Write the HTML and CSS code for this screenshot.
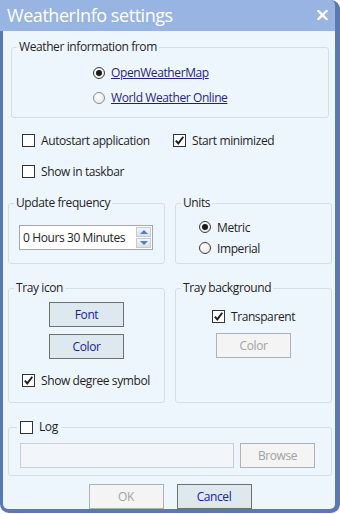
FILE: index.html
```html
<!DOCTYPE html>
<html lang="en">
<head>
    <meta charset="UTF-8">
    <title>WeatherInfo settings</title>
    <link rel="stylesheet" href="styles.css">
</head>
<body>

<div class="window">
    <div class="titlebar">
        <span class="title">WeatherInfo settings</span>
        <svg class="close" width="11" height="10" viewBox="0 0 11 10">
            <path d="M1.5 1 L9.5 9 M9.5 1 L1.5 9" stroke="#fff" stroke-width="2.4" stroke-linecap="square"/>
        </svg>
    </div>

    <div class="content">
        <fieldset class="group source">
            <legend>Weather information from</legend>
            <div class="radio-list">
                <label class="option"><span class="radio on"></span><a class="link">OpenWeatherMap</a></label>
                <label class="option"><span class="radio faint"></span><a class="link">World Weather Online</a></label>
            </div>
        </fieldset>

        <div class="checks">
            <div class="check-row">
                <label class="option first"><span class="box"></span>Autostart application</label>
                <label class="option"><span class="box on"><svg width="11" height="11" viewBox="0 0 11 11"><path d="M1.8 5.6 L4.3 8.4 L9.3 1.8" fill="none" stroke="#1e1e1e" stroke-width="1.9"/></svg></span>Start minimized</label>
            </div>
            <div class="check-row">
                <label class="option first"><span class="box"></span>Show in taskbar</label>
            </div>
        </div>

        <div class="pair">
            <fieldset class="group freq">
                <legend>Update frequency</legend>
                <div class="spin">
                    <span class="spin-value">0 Hours 30 Minutes</span>
                    <span class="spin-buttons">
                        <span class="spin-btn"><span class="arrow up"></span></span>
                        <span class="spin-btn"><span class="arrow down"></span></span>
                    </span>
                </div>
            </fieldset>
            <fieldset class="group freq">
                <legend>Units</legend>
                <div class="units">
                    <label class="option"><span class="radio on"></span>Metric</label>
                    <label class="option"><span class="radio"></span>Imperial</label>
                </div>
            </fieldset>
        </div>

        <div class="pair">
            <fieldset class="group tray">
                <legend>Tray icon</legend>
                <div class="tray-icon">
                    <button class="btn">Font</button>
                    <button class="btn">Color</button>
                    <label class="option degree"><span class="box on"><svg width="11" height="11" viewBox="0 0 11 11"><path d="M1.8 5.6 L4.3 8.4 L9.3 1.8" fill="none" stroke="#1e1e1e" stroke-width="1.9"/></svg></span>Show degree symbol</label>
                </div>
            </fieldset>
            <fieldset class="group tray">
                <legend>Tray background</legend>
                <div class="tray-bg">
                    <label class="option"><span class="box on"><svg width="11" height="11" viewBox="0 0 11 11"><path d="M1.8 5.6 L4.3 8.4 L9.3 1.8" fill="none" stroke="#1e1e1e" stroke-width="1.9"/></svg></span>Transparent</label>
                    <button class="btn" disabled>Color</button>
                </div>
            </fieldset>
        </div>

        <fieldset class="group log">
            <legend class="log-legend"><label class="option"><span class="box"></span>Log</label></legend>
            <div class="log-row">
                <div class="textbox"></div>
                <button class="btn" disabled>Browse</button>
            </div>
        </fieldset>

        <div class="actions">
            <button class="btn" disabled>OK</button>
            <button class="btn">Cancel</button>
        </div>
    </div>
</div>

</body>
</html>
```

FILE: styles.css
```css
html, body {
    margin: 0;
    padding: 0;
}
body {
    background-color: #ffffff;
    font-family: "Open Sans", "Noto Sans", sans-serif;
    font-size: 12px;
    letter-spacing: -0.4px;
    color: #1e1e1e;
}
.window {
    width: 340px;
    height: 513px;
    box-sizing: border-box;
    background-color: #5a79b3;
    border-radius: 0 9px 9px 9px;
    padding: 0 5px 5px 0;
    display: flex;
    flex-direction: column;
}
.titlebar {
    height: 31px;
    flex: none;
    background-color: #97b4e3;
    border-top-right-radius: 5px;
    display: flex;
    align-items: center;
    justify-content: space-between;
    padding: 0 7px 0 7px;
}
.title {
    color: #ffffff;
    font-size: 18px;
    letter-spacing: -0.45px;
    line-height: 31px;
}
.close {
    margin-top: -2px;
}
.content {
    flex: 1;
    margin-left: 3px;
    background-color: #eef6fd;
    border-radius: 0 0 5px 5px;
    padding: 0 3px 0 5px;
    display: flex;
    flex-direction: column;
}
.group {
    margin: 0;
    padding: 0;
    min-width: 0;
    box-sizing: border-box;
    border: 1px solid #d5dee6;
    border-radius: 3px;
}
.group legend {
    margin-left: 5px;
    padding: 0 2px;
    line-height: 16px;
}
.option {
    display: flex;
    align-items: center;
    gap: 6px;
    white-space: nowrap;
}
.link {
    color: #1f1f80;
    text-decoration: underline;
}
.radio {
    width: 12px;
    height: 12px;
    box-sizing: border-box;
    border-radius: 50%;
    border: 1px solid #3a3a3a;
    background: radial-gradient(circle at 40% 35%, #ffffff, #e2e2e2);
    display: inline-flex;
    align-items: center;
    justify-content: center;
    flex: none;
}
.radio.faint {
    border-color: #8c8c8c;
}
.radio.on::after {
    content: "";
    width: 6px;
    height: 6px;
    border-radius: 50%;
    background-color: #1a1a1a;
}
.box {
    width: 13px;
    height: 13px;
    box-sizing: border-box;
    border: 1px solid #333333;
    background-color: #ffffff;
    display: inline-flex;
    align-items: center;
    justify-content: center;
    flex: none;
}

/* weather source */
.source {
    margin: 8px 3px 0 3px;
    height: 79px;
}
.radio-list {
    padding: 7px 0 0 81px;
    display: flex;
    flex-direction: column;
    gap: 4px;
}
.radio-list .option {
    height: 21px;
}

/* checkboxes */
.checks {
    margin-top: 16px;
    padding-left: 14px;
    display: flex;
    flex-direction: column;
    gap: 18px;
}
.check-row {
    display: flex;
    height: 13px;
}
.check-row .first {
    width: 151px;
}

/* frequency / units */
.pair {
    display: grid;
    grid-template-columns: 157px 157px;
    gap: 10px;
    margin-top: 17px;
}
.pair + .pair {
    margin-top: 16px;
}
.freq {
    height: 69px;
}
.spin {
    margin: 14px 0 0 10px;
    width: 134px;
    height: 25px;
    box-sizing: border-box;
    border: 1px solid #a3a7ac;
    background-color: #ffffff;
    display: flex;
    align-items: center;
    padding: 0 1px 0 3px;
}
.spin-value {
    flex: 1;
}
.spin-buttons {
    display: flex;
    flex-direction: column;
    gap: 1px;
    width: 15px;
}
.spin-btn {
    height: 10px;
    box-sizing: border-box;
    border: 1px solid #c3cad3;
    background: linear-gradient(#f3f6f9, #d8e0ea);
    display: flex;
    align-items: center;
    justify-content: center;
}
.arrow {
    width: 0;
    height: 0;
    border-left: 4px solid transparent;
    border-right: 4px solid transparent;
}
.arrow.up {
    border-bottom: 4px solid #5a7db8;
}
.arrow.down {
    border-top: 4px solid #5a7db8;
}
.units {
    padding: 6px 0 0 23px;
    display: flex;
    flex-direction: column;
    gap: 1px;
}
.units .option {
    height: 20px;
}

/* tray */
.tray {
    height: 123px;
}
.tray-icon, .tray-bg {
    display: flex;
    flex-direction: column;
    align-items: center;
}
.tray-icon {
    padding-top: 6px;
    gap: 7px;
}
.tray-icon .degree {
    align-self: flex-start;
    margin: 8px 0 0 13px;
    height: 13px;
}
.tray-bg {
    padding-top: 14px;
    gap: 10px;
}
.tray-bg .option {
    height: 13px;
}
.btn {
    width: 75px;
    height: 25px;
    box-sizing: border-box;
    padding: 0;
    border: 1px solid #707070;
    background-color: #dde9ee;
    color: #1c1c9c;
    font-family: inherit;
    font-size: 12px;
    letter-spacing: inherit;
}
.btn:disabled {
    border-color: #adb2b5;
    background-color: #f4f4f4;
    color: #a2a2a2;
}

/* log */
.log {
    margin-top: 16px;
    height: 57px;
}
.group .log-legend {
    margin-left: 8px;
    padding: 0 3px;
}
.log-row {
    display: flex;
    gap: 6px;
    padding: 8px 0 0 11px;
}
.textbox {
    width: 214px;
    height: 25px;
    box-sizing: border-box;
    border: 1px solid #c9ced4;
    background-color: #f2f6fa;
}

/* dialog buttons */
.actions {
    display: flex;
    justify-content: center;
    gap: 13px;
    margin-top: 8px;
}
```
